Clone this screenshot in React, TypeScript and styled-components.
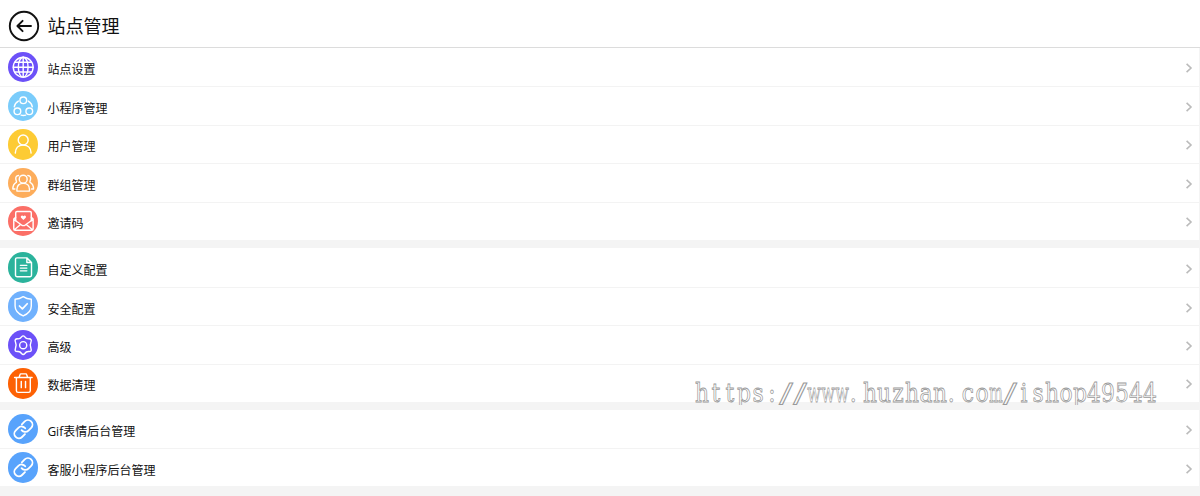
import type { ReactNode } from "react";
import styled, { createGlobalStyle } from "styled-components";

type Item = {
  label: string;
  color: string;
  icon: ReactNode;
};

const GlobeIcon = (
  <>
    <circle cx="15" cy="15" r="9.8" />
    <ellipse cx="15" cy="15" rx="4.8" ry="9.8" />
    <path d="M15 5.2v19.6M5.2 15h19.6M6.8 10.2h16.4M6.8 19.8h16.4" />
  </>
);

const MiniAppIcon = (
  <>
    <circle cx="15.1" cy="9.2" r="3.3" />
    <circle cx="9.3" cy="20" r="3.3" />
    <circle cx="21" cy="20" r="3.3" />
    <path d="M10.2 9.9Q6.6 12 6.2 15.6M20 9.9Q23.6 12 24 15.6M12.9 23.8Q15.1 24.6 17.4 23.8" />
  </>
);

const UserIcon = (
  <>
    <circle cx="15" cy="10.9" r="4.9" />
    <path d="M7.2 23.8C7.4 18.5 10.5 15.9 15 15.9S22.6 18.5 22.8 23.8" />
  </>
);

const GroupIcon = (
  <>
    <circle cx="15" cy="11" r="3.9" />
    <path d="M8.8 22.8V21C8.8 17.2 11.3 15.2 15 15.2S21.2 17.2 21.2 21V22.8Z" />
    <path d="M10.4 7.4C8.1 7.4 7.3 9.4 7.8 11.4C8 12.4 8.7 13.2 8.2 14.1C5.8 15.3 4.8 17 4.8 20.8H6.8M19.6 7.4C21.9 7.4 22.7 9.4 22.2 11.4C22 12.4 21.3 13.2 21.8 14.1C24.2 15.3 25.2 17 25.2 20.8H23.2" />
  </>
);

const InviteIcon = (
  <>
    <path d="M7.6 14.5V6.7Q7.6 5.4 8.9 5.4H21.7Q23 5.4 23 6.7V14.5" />
    <path d="M7.6 11L5.7 12.8V22.6Q5.7 24 7.1 24H23.4Q24.8 24 24.8 22.6V12.8L23 11M5.9 13.3L13.4 18.8Q15.2 20 17 18.8L24.6 13.3M6.3 23.5L12.4 18.2M24.2 23.5L18 18.2" />
    <path
      d="M15.2 13.8L12.9 11.6C11.8 10.2 13.9 8.4 15.2 10.1C16.5 8.4 18.6 10.2 17.5 11.6Z"
      fill="#fff"
      stroke="none"
    />
  </>
);

const DocumentIcon = (
  <>
    <path d="M18.6 5.8H8.8Q7.4 5.8 7.4 7.2V23Q7.4 24.4 8.8 24.4H21.8Q23.2 24.4 23.2 23V10.3ZM18.6 5.8V10.3H23.2" />
    <path d="M12.2 13.2H18.6M12.2 15.9H18.6M12.2 18.6H18.6" />
  </>
);

const ShieldIcon = (
  <>
    <path d="M15 5.6Q18.4 8 23 8.1V14.8C23 19.6 19.7 22.6 15 24.6C10.3 22.6 7 19.6 7 14.8V8.1Q11.6 8 15 5.6Z" />
    <path d="M11.3 14.8L14.2 17.7L19 12.6" strokeWidth="1.7" />
  </>
);

const GearIcon = (
  <>
    <path d="M13.4 6.8Q15 4.8 16.6 6.8Q18 9 20.7 8.7Q23.8 8.7 22.7 11.6Q21.2 15 22.7 18.4Q23.8 21.3 20.7 21.3Q18 21 16.6 23.2Q15 25.2 13.4 23.2Q12 21 9.3 21.3Q6.2 21.3 7.3 18.4Q8.8 15 7.3 11.6Q6.2 8.7 9.3 8.7Q12 9 13.4 6.8Z" />
    <circle cx="15" cy="15" r="3.5" />
  </>
);

const TrashIcon = (
  <>
    <path d="M6.5 9.4H23.8M8.3 9.4V22.4Q8.3 24.1 10 24.1H20.3Q22 24.1 22 22.4V9.4M11 9.1L11.8 6.6Q12 5.8 12.8 5.8H17.5Q18.3 5.8 18.5 6.6L19.3 9.1" />
    <path d="M13.1 13.2V19.4M17.3 13.2V19.4" />
  </>
);

const LinkIcon = (
  <g transform="translate(4.4 4.2) scale(0.9)" strokeWidth="2">
    <path d="M10 13a5 5 0 0 0 7.54.54l3-3a5 5 0 0 0-7.07-7.07l-3.2 3.2" />
    <path d="M14 11a5 5 0 0 0-7.54-.54l-3 3a5 5 0 0 0 7.07 7.07l3.2-3.2" />
  </g>
);

const groups: Item[][] = [
  [
    { label: "站点设置", color: "#6c51f8", icon: GlobeIcon },
    { label: "小程序管理", color: "#7accfb", icon: MiniAppIcon },
    { label: "用户管理", color: "#fdcb34", icon: UserIcon },
    { label: "群组管理", color: "#fdad5b", icon: GroupIcon },
    { label: "邀请码", color: "#fb6f67", icon: InviteIcon },
  ],
  [
    { label: "自定义配置", color: "#2bb39c", icon: DocumentIcon },
    { label: "安全配置", color: "#70b1fd", icon: ShieldIcon },
    { label: "高级", color: "#6c51f8", icon: GearIcon },
    { label: "数据清理", color: "#fd6104", icon: TrashIcon },
  ],
  [
    { label: "Gif表情后台管理", color: "#58a3fc", icon: LinkIcon },
    { label: "客服小程序后台管理", color: "#58a3fc", icon: LinkIcon },
  ],
];

// Every character sits in a 14px cell, each run is stretched to fill its cells.
const CELL = 14;
const watermarkRuns = [
  { text: "https:", start: 0, stretch: 0.84 },
  { text: "//", start: 6, stretch: 1.55 },
  { text: "www", start: 8, stretch: 0.61 },
  { text: ".huzhan.co", start: 11, stretch: 0.84 },
  { text: "m", start: 21, stretch: 0.56 },
  { text: "/", start: 22, stretch: 1.55 },
  { text: "ishop49544", start: 23, stretch: 0.84 },
];

const cellCenters = (text: string, start: number, stretch: number) =>
  [...text]
    .map((char, i) => {
      const center = (start + i + (char === "." ? 0.3 : 0.5)) * CELL;
      return (center / stretch).toFixed(2);
    })
    .join(" ");

export default function App() {
  return (
    <>
      <GlobalStyle />
      <Page>
        <Header>
          <BackButton aria-label="back">
            <svg width="32" height="32" viewBox="0 0 32 32">
              <circle cx="16" cy="16" r="14.2" />
              <path d="M23 16H9.6M14.6 10.8L9.4 16L14.6 21.2" />
            </svg>
          </BackButton>
          <Title>站点管理</Title>
        </Header>
        {groups.map((items, index) => (
          <Group key={index}>
            {items.map((item) => (
              <Row key={item.label}>
                <IconCircle $color={item.color}>
                  <svg viewBox="0 0 30 30">{item.icon}</svg>
                </IconCircle>
                <Label>{item.label}</Label>
                <Chevron viewBox="0 0 8 10">
                  <path d="M1.6 0.8L6 5L1.6 9.2" />
                </Chevron>
              </Row>
            ))}
          </Group>
        ))}
      </Page>
      <Watermark width="470" height="38">
        {watermarkRuns.map(({ text, start, stretch }) => (
          <text
            key={start}
            x={cellCenters(text, start, stretch)}
            y="26"
            textAnchor="middle"
            transform={`scale(${stretch} 1)`}
          >
            {text}
          </text>
        ))}
      </Watermark>
    </>
  );
}

const GlobalStyle = createGlobalStyle`
  * {
    box-sizing: border-box;
  }

  body {
    margin: 0;
    background: #f4f4f4;
    font-family: "Open Sans", "Noto Sans CJK SC", sans-serif;
    overflow: hidden;
  }
`;

const Page = styled.main`
  display: flex;
  flex-direction: column;
  gap: 8px;

  width: 100%;
  height: 496px;
`;

const Header = styled.header`
  display: flex;
  align-items: center;
  gap: 7.5px;

  height: 48px;
  margin-bottom: -8px;
  padding: 5px 8px 0;
  background: #fff;
  border-bottom: 1px solid #dcdcdc;
`;

const BackButton = styled.button`
  display: flex;

  padding: 0;
  border: 0;
  background: none;

  svg {
    fill: none;
    stroke: #111;
    stroke-width: 1.9;
    stroke-linecap: round;
    stroke-linejoin: round;
  }
`;

const Title = styled.h1`
  margin: 0;
  color: #111;
  font-size: 18px;
  font-weight: 400;
  line-height: 26px;
`;

const Group = styled.section`
  display: flex;
  flex-direction: column;

  margin-right: 1px;
  background: #fff;

  &:nth-of-type(2) {
    margin-top: 0.5px;
  }

  &:nth-of-type(3) {
    margin-top: -0.5px;
  }
`;

const Row = styled.div`
  display: flex;
  align-items: center;

  height: 38.4px;
  padding: 0 6.5px 0 8px;

  & + & {
    border-top: 1px solid #f3f3f3;
  }
`;

const IconCircle = styled.span<{ $color: string }>`
  display: flex;
  flex-shrink: 0;

  width: 30.4px;
  height: 30.4px;
  border-radius: 50%;
  background: ${({ $color }) => $color};

  svg {
    width: 100%;
    height: 100%;
    fill: none;
    stroke: #fff;
    stroke-width: 1.4;
    stroke-linecap: round;
    stroke-linejoin: round;
  }
`;

const Label = styled.span`
  flex: 1;

  margin-left: 9px;
  padding-top: 6px;
  color: #111;
  font-size: 12px;
  line-height: 18px;
`;

const Chevron = styled.svg`
  width: 8px;
  height: 10px;
  margin-top: 2px;
  fill: none;
  stroke: #bbb;
  stroke-width: 1.6;
`;

const Watermark = styled.svg`
  position: absolute;
  left: 695px;
  top: 376px;
  clip-path: inset(0 0 9px 0);
  pointer-events: none;

  text {
    fill: #fff;
    fill-opacity: 0.6;
    stroke: #999;
    stroke-width: 0.8;
    font-family: "DejaVu Serif", serif;
    font-size: 26px;
  }
`;
